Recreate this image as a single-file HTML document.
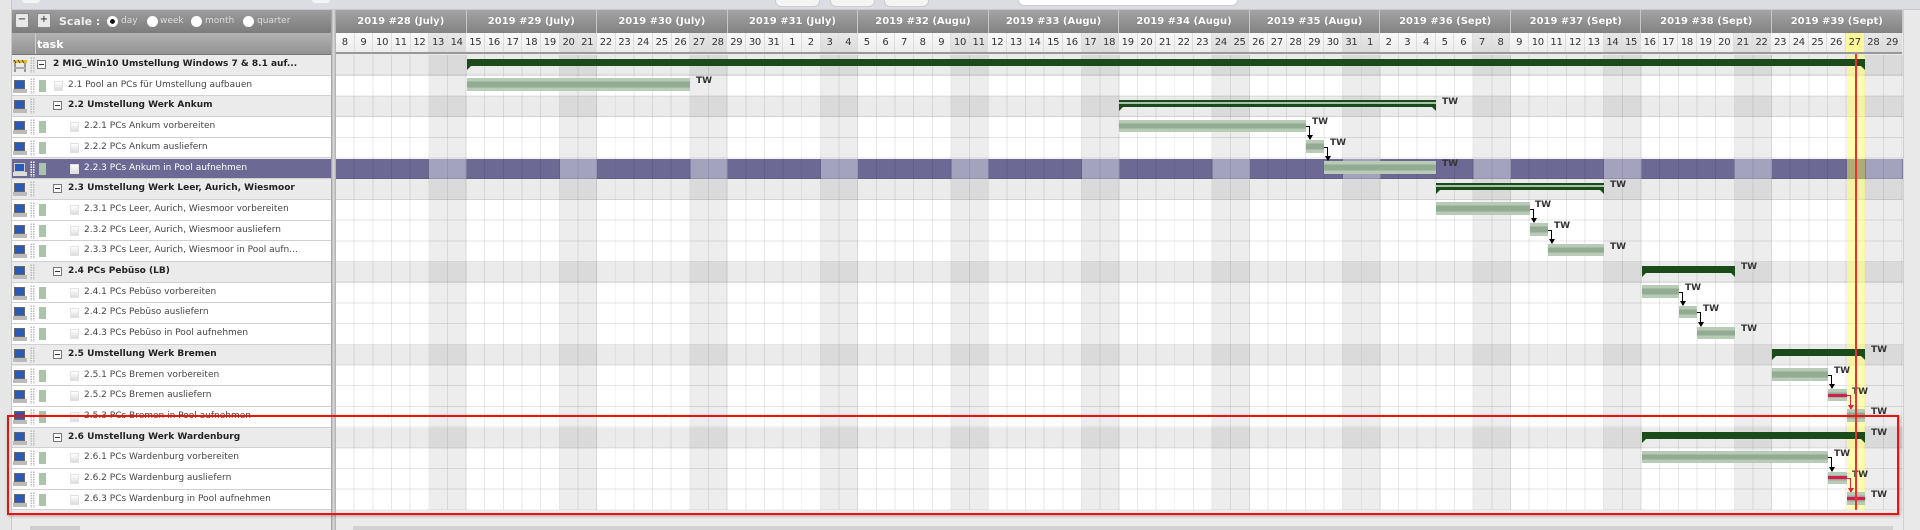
<!DOCTYPE html>
<html><head><meta charset="utf-8"><style>
*{margin:0;padding:0;box-sizing:border-box}
body{width:1920px;height:530px;overflow:hidden;background:#e9e9e9;position:relative;font-family:"DejaVu Sans","Liberation Sans",sans-serif}
.a{position:absolute}
.lrow{position:absolute;left:12px;width:319px;height:20.7px;border-bottom:1px solid #d0d0d0;font-size:9px;color:#444;white-space:nowrap}
.lrow.s{background:#ebebeb;font-weight:bold;color:#222}
.lrow.t{background:#fff}
.lrow.sel{background:#6c6a94;color:#fff}
.pc{position:absolute;left:1px;top:4px;width:14px;height:13px}
.grip{position:absolute;left:18px;top:2px;width:5px;height:16px;background:radial-gradient(circle,#bbb 0.8px,transparent 1px) 0 0/2.5px 2.5px}
.gr{position:absolute;left:27px;top:4px;width:7px;height:12px;background:#a9c4a9}
.box{position:absolute;top:5px;width:9px;height:9px;border:1px solid #777;background:#fafafa}
.box:after{content:"";position:absolute;left:1px;top:3px;width:5px;height:1px;background:#333}
.lf{position:absolute;top:5px;width:9px;height:10px;background:linear-gradient(#fff,#ddd);border:1px solid #e2e2e2}
.tx{position:absolute;top:4px}
.tb{position:absolute;height:12.5px;background:linear-gradient(#b7cbb7 0,#b7cbb7 28%,#93aa93 28%,#93aa93 72%,#b7cbb7 72%)}
.sb{position:absolute;height:7px;background:#1b4a1b}
.sb:before,.sb:after{content:"";position:absolute;top:7px;border-top:4px solid #1b4a1b}
.sb:before{left:0;border-right:4px solid transparent}
.sb:after{right:0;border-left:4px solid transparent}
.sb.p{background:linear-gradient(#1b4a1b 0,#1b4a1b 30%,#a8c4a8 30%,#a8c4a8 55%,#1b4a1b 55%)}
.tw{position:absolute;font-size:9px;font-weight:bold;color:#333}
.ar{position:absolute;width:4px;border-top:1px solid #000;border-right:1px solid #000}
.ar:after{content:"";position:absolute;right:-4px;bottom:-1px;border-left:3.5px solid transparent;border-right:3.5px solid transparent;border-top:5px solid #000}
.ar.r{border-color:#e0204a}
.ar.r:after{border-top-color:#e0204a;border-left-color:transparent;border-right-color:transparent}
.crit{position:absolute;height:3px;background:#d61e4e}
#wk{position:absolute;left:336px;top:10px;height:23px;display:flex}
#wk div{width:130.55px;height:23px;border-right:1px solid #c8c8c8;background:linear-gradient(#a4a4a4,#828282);color:#fff;font-weight:bold;font-size:10px;text-align:center;line-height:23px;text-shadow:0 0 1px #666}
#dy{position:absolute;left:336px;top:33px;height:21px;display:flex;border-bottom:2px solid #999}
#dy div{width:18.65px;height:19px;border-right:1px solid #ddd;background:linear-gradient(#fafafa,#ececec);font-size:10px;color:#333;text-align:center;line-height:19px;letter-spacing:-0.3px}
#dy div.w{background:linear-gradient(#e8e8e8,#dadada)}
#dy div.y{background:#fdf99a}
</style></head><body>
<div class="a" style="left:0;top:0;width:1920px;height:10px;background:#dcdde3;border-bottom:1px solid #c8c9cf"></div>
<div class="a" style="left:0;top:0;width:12px;height:530px;background:#e6e6e6;border-right:1px solid #c8c8c8"></div>
<div class="a" style="left:22px;top:0;width:18px;height:3px;background:#f4f4f4;border-radius:0 0 6px 6px"></div>
<div class="a" style="left:312px;top:0;width:18px;height:3px;background:#f4f4f4;border-radius:0 0 6px 6px"></div>
<div class="a" style="left:775px;top:0;width:45px;height:7px;background:#f4f4f4;border:1px solid #ccc;border-top:0;border-radius:0 0 6px 6px"></div>
<div class="a" style="left:830px;top:0;width:45px;height:7px;background:#f4f4f4;border:1px solid #ccc;border-top:0;border-radius:0 0 6px 6px"></div>
<div class="a" style="left:884px;top:0;width:45px;height:7px;background:#f4f4f4;border:1px solid #ccc;border-top:0;border-radius:0 0 6px 6px"></div>
<div class="a" style="left:1018px;top:0;width:220px;height:6px;background:#fff;border:1px solid #ccc;border-top:0;border-radius:0 0 6px 6px"></div>

<div class="a" style="left:12px;top:10px;width:319px;height:23px;background:linear-gradient(#9c9c9c,#7c7c7c)"></div>
<div class="a" style="left:15px;top:13px;width:14px;height:15px;background:#e8e8e8;border:1px solid #888;border-radius:2px;font-size:10px;text-align:center;line-height:12px;color:#222">−</div>
<div class="a" style="left:37px;top:13px;width:14px;height:15px;background:#e8e8e8;border:1px solid #888;border-radius:2px;font-size:10px;text-align:center;line-height:12px;color:#222">+</div>
<div class="a" style="left:59px;top:15px;font-size:11px;font-weight:bold;color:#eee">Scale :</div>
<div class="a" style="left:107px;top:16px;width:11px;height:11px;border-radius:50%;background:#fff;border:3px solid #fff;box-shadow:inset 0 0 0 3px #111"></div>
<div class="a" style="left:121px;top:16px;font-size:9px;color:#ddd">day</div>
<div class="a" style="left:147px;top:16px;width:11px;height:11px;border-radius:50%;background:#fff"></div>
<div class="a" style="left:160px;top:16px;font-size:9px;color:#ddd">week</div>
<div class="a" style="left:191px;top:16px;width:11px;height:11px;border-radius:50%;background:#fff"></div>
<div class="a" style="left:205px;top:16px;font-size:9px;color:#ddd">month</div>
<div class="a" style="left:243px;top:16px;width:11px;height:11px;border-radius:50%;background:#fff"></div>
<div class="a" style="left:257px;top:16px;font-size:9px;color:#ddd">quarter</div>
<div class="a" style="left:12px;top:33px;width:319px;height:22px;background:linear-gradient(#b2b2b2,#939393);border-bottom:1px solid #777"></div>
<div class="a" style="left:35px;top:33px;width:1px;height:21px;background:#ccc"></div>
<div class="a" style="left:37px;top:38px;font-size:11px;font-weight:bold;color:#fff">task</div>

<div id="wk"><div>2019 #28 (July)</div><div>2019 #29 (July)</div><div>2019 #30 (July)</div><div>2019 #31 (July)</div><div>2019 #32 (Augu)</div><div>2019 #33 (Augu)</div><div>2019 #34 (Augu)</div><div>2019 #35 (Augu)</div><div>2019 #36 (Sept)</div><div>2019 #37 (Sept)</div><div>2019 #38 (Sept)</div><div>2019 #39 (Sept)</div></div>
<div id="dy"><div>8</div><div>9</div><div>10</div><div>11</div><div>12</div><div class="w">13</div><div class="w">14</div><div>15</div><div>16</div><div>17</div><div>18</div><div>19</div><div class="w">20</div><div class="w">21</div><div>22</div><div>23</div><div>24</div><div>25</div><div>26</div><div class="w">27</div><div class="w">28</div><div>29</div><div>30</div><div>31</div><div>1</div><div>2</div><div class="w">3</div><div class="w">4</div><div>5</div><div>6</div><div>7</div><div>8</div><div>9</div><div class="w">10</div><div class="w">11</div><div>12</div><div>13</div><div>14</div><div>15</div><div>16</div><div class="w">17</div><div class="w">18</div><div>19</div><div>20</div><div>21</div><div>22</div><div>23</div><div class="w">24</div><div class="w">25</div><div>26</div><div>27</div><div>28</div><div>29</div><div>30</div><div class="w">31</div><div class="w">1</div><div>2</div><div>3</div><div>4</div><div>5</div><div>6</div><div class="w">7</div><div class="w">8</div><div>9</div><div>10</div><div>11</div><div>12</div><div>13</div><div class="w">14</div><div class="w">15</div><div>16</div><div>17</div><div>18</div><div>19</div><div>20</div><div class="w">21</div><div class="w">22</div><div>23</div><div>24</div><div>25</div><div>26</div><div class="y">27</div><div class="w">28</div><div class="w">29</div></div>

<div class="a" style="left:336px;top:55px;width:1567px;height:455.4px;overflow:hidden;background:#fff">
<div style="position:absolute;left:0;top:0;width:1567px;height:20.7px;background:#ebebeb"></div>
<div style="position:absolute;left:0;top:41.4px;width:1567px;height:20.7px;background:#ebebeb"></div>
<div style="position:absolute;left:0;top:103.5px;width:1567px;height:20.7px;background:#6c6a94"></div>
<div style="position:absolute;left:0;top:124.2px;width:1567px;height:20.7px;background:#ebebeb"></div>
<div style="position:absolute;left:0;top:207px;width:1567px;height:20.7px;background:#ebebeb"></div>
<div style="position:absolute;left:0;top:289.8px;width:1567px;height:20.7px;background:#ebebeb"></div>
<div style="position:absolute;left:0;top:372.6px;width:1567px;height:20.7px;background:#ebebeb"></div>
<div style="position:absolute;left:0;top:0;width:1567px;height:103.5px;background:repeating-linear-gradient(90deg,transparent 0,transparent 93.25px,rgba(0,0,0,.07) 93.25px,rgba(0,0,0,.07) 130.55px)"></div>
<div style="position:absolute;left:0;top:103.5px;width:1567px;height:20.7px;background:repeating-linear-gradient(90deg,transparent 0,transparent 93.25px,rgba(255,255,255,.38) 93.25px,rgba(255,255,255,.38) 130.55px)"></div>
<div style="position:absolute;left:0;top:124.2px;width:1567px;height:331.2px;background:repeating-linear-gradient(90deg,transparent 0,transparent 93.25px,rgba(0,0,0,.07) 93.25px,rgba(0,0,0,.07) 130.55px)"></div>
<div style="position:absolute;left:0;top:0;width:1567px;height:455.4px;background:repeating-linear-gradient(90deg,transparent 0,transparent 17.65px,rgba(0,0,0,.09) 17.65px,rgba(0,0,0,.09) 18.65px)"></div>
<div style="position:absolute;left:0;top:0;width:1567px;height:455.4px;background:repeating-linear-gradient(180deg,transparent 0,transparent 19.7px,rgba(0,0,0,.1) 19.7px,rgba(0,0,0,.1) 20.7px)"></div>
<div style="position:absolute;left:1510.65px;top:0;width:18.65px;height:455.4px;background:rgba(255,250,80,.45)"></div>
</div>
<div class="a" style="left:1903px;top:10px;width:17px;height:520px;background:#e9e9e9;border-left:1px solid #d0d0d0"></div>

<div class="a" style="left:331px;top:10px;width:5px;height:520px;background:linear-gradient(90deg,#999,#ddd,#aaa)"></div>

<div class="lrow s" style="top:55px"><div class="pc"><svg width="14" height="13"><rect x="0" y="1" width="14" height="3" fill="#e8c020"/><path d="M1 1l2 3M5 1l2 3M9 1l2 3" stroke="#444"/><rect x="1" y="4" width="2" height="9" fill="#999"/><rect x="11" y="4" width="2" height="9" fill="#999"/><rect x="1" y="8" width="12" height="2" fill="#aaa"/></svg></div><div class="grip"></div><div class="box" style="left:25px"></div><div class="tx" style="left:41px">2 MIG_Win10 Umstellung Windows 7 &amp; 8.1 auf...</div></div>
<div class="lrow t" style="top:75.7px"><div class="pc"><svg width="14" height="13"><rect x="1.5" y="0.5" width="10" height="8" fill="#2a5ab8" stroke="#666"/><rect x="0" y="9" width="14" height="4" fill="#bbb"/></svg></div><div class="grip"></div><div class="gr"></div><div class="lf" style="left:42px"></div><div class="tx" style="left:56px">2.1 Pool an PCs für Umstellung aufbauen</div></div>
<div class="lrow s" style="top:96.4px"><div class="pc"><svg width="14" height="13"><rect x="1.5" y="0.5" width="10" height="8" fill="#2a5ab8" stroke="#666"/><rect x="0" y="9" width="14" height="4" fill="#bbb"/></svg></div><div class="grip"></div><div class="box" style="left:41px"></div><div class="tx" style="left:56px">2.2 Umstellung Werk Ankum</div></div>
<div class="lrow t" style="top:117.1px"><div class="pc"><svg width="14" height="13"><rect x="1.5" y="0.5" width="10" height="8" fill="#2a5ab8" stroke="#666"/><rect x="0" y="9" width="14" height="4" fill="#bbb"/></svg></div><div class="grip"></div><div class="gr"></div><div class="lf" style="left:58px"></div><div class="tx" style="left:72px">2.2.1 PCs Ankum vorbereiten</div></div>
<div class="lrow t" style="top:137.8px"><div class="pc"><svg width="14" height="13"><rect x="1.5" y="0.5" width="10" height="8" fill="#2a5ab8" stroke="#666"/><rect x="0" y="9" width="14" height="4" fill="#bbb"/></svg></div><div class="grip"></div><div class="gr"></div><div class="lf" style="left:58px"></div><div class="tx" style="left:72px">2.2.2 PCs Ankum ausliefern</div></div>
<div class="lrow sel" style="top:158.5px"><div class="pc"><svg width="14" height="13"><rect x="1.5" y="0.5" width="10" height="8" fill="#2a5ab8" stroke="#ccc"/><rect x="0" y="9" width="14" height="4" fill="#ddd"/></svg></div><div class="grip" style="background:radial-gradient(circle,#fff 0.8px,transparent 1px) 0 0/2.5px 2.5px"></div><div class="gr"></div><div class="lf" style="left:58px"></div><div class="tx" style="left:72px">2.2.3 PCs Ankum in Pool aufnehmen</div></div>
<div class="lrow s" style="top:179.2px"><div class="pc"><svg width="14" height="13"><rect x="1.5" y="0.5" width="10" height="8" fill="#2a5ab8" stroke="#666"/><rect x="0" y="9" width="14" height="4" fill="#bbb"/></svg></div><div class="grip"></div><div class="box" style="left:41px"></div><div class="tx" style="left:56px">2.3 Umstellung Werk Leer, Aurich, Wiesmoor</div></div>
<div class="lrow t" style="top:199.9px"><div class="pc"><svg width="14" height="13"><rect x="1.5" y="0.5" width="10" height="8" fill="#2a5ab8" stroke="#666"/><rect x="0" y="9" width="14" height="4" fill="#bbb"/></svg></div><div class="grip"></div><div class="gr"></div><div class="lf" style="left:58px"></div><div class="tx" style="left:72px">2.3.1 PCs Leer, Aurich, Wiesmoor vorbereiten</div></div>
<div class="lrow t" style="top:220.6px"><div class="pc"><svg width="14" height="13"><rect x="1.5" y="0.5" width="10" height="8" fill="#2a5ab8" stroke="#666"/><rect x="0" y="9" width="14" height="4" fill="#bbb"/></svg></div><div class="grip"></div><div class="gr"></div><div class="lf" style="left:58px"></div><div class="tx" style="left:72px">2.3.2 PCs Leer, Aurich, Wiesmoor ausliefern</div></div>
<div class="lrow t" style="top:241.3px"><div class="pc"><svg width="14" height="13"><rect x="1.5" y="0.5" width="10" height="8" fill="#2a5ab8" stroke="#666"/><rect x="0" y="9" width="14" height="4" fill="#bbb"/></svg></div><div class="grip"></div><div class="gr"></div><div class="lf" style="left:58px"></div><div class="tx" style="left:72px">2.3.3 PCs Leer, Aurich, Wiesmoor in Pool aufn...</div></div>
<div class="lrow s" style="top:262px"><div class="pc"><svg width="14" height="13"><rect x="1.5" y="0.5" width="10" height="8" fill="#2a5ab8" stroke="#666"/><rect x="0" y="9" width="14" height="4" fill="#bbb"/></svg></div><div class="grip"></div><div class="box" style="left:41px"></div><div class="tx" style="left:56px">2.4 PCs Pebüso (LB)</div></div>
<div class="lrow t" style="top:282.7px"><div class="pc"><svg width="14" height="13"><rect x="1.5" y="0.5" width="10" height="8" fill="#2a5ab8" stroke="#666"/><rect x="0" y="9" width="14" height="4" fill="#bbb"/></svg></div><div class="grip"></div><div class="gr"></div><div class="lf" style="left:58px"></div><div class="tx" style="left:72px">2.4.1 PCs Pebüso vorbereiten</div></div>
<div class="lrow t" style="top:303.4px"><div class="pc"><svg width="14" height="13"><rect x="1.5" y="0.5" width="10" height="8" fill="#2a5ab8" stroke="#666"/><rect x="0" y="9" width="14" height="4" fill="#bbb"/></svg></div><div class="grip"></div><div class="gr"></div><div class="lf" style="left:58px"></div><div class="tx" style="left:72px">2.4.2 PCs Pebüso ausliefern</div></div>
<div class="lrow t" style="top:324.1px"><div class="pc"><svg width="14" height="13"><rect x="1.5" y="0.5" width="10" height="8" fill="#2a5ab8" stroke="#666"/><rect x="0" y="9" width="14" height="4" fill="#bbb"/></svg></div><div class="grip"></div><div class="gr"></div><div class="lf" style="left:58px"></div><div class="tx" style="left:72px">2.4.3 PCs Pebüso in Pool aufnehmen</div></div>
<div class="lrow s" style="top:344.8px"><div class="pc"><svg width="14" height="13"><rect x="1.5" y="0.5" width="10" height="8" fill="#2a5ab8" stroke="#666"/><rect x="0" y="9" width="14" height="4" fill="#bbb"/></svg></div><div class="grip"></div><div class="box" style="left:41px"></div><div class="tx" style="left:56px">2.5 Umstellung Werk Bremen</div></div>
<div class="lrow t" style="top:365.5px"><div class="pc"><svg width="14" height="13"><rect x="1.5" y="0.5" width="10" height="8" fill="#2a5ab8" stroke="#666"/><rect x="0" y="9" width="14" height="4" fill="#bbb"/></svg></div><div class="grip"></div><div class="gr"></div><div class="lf" style="left:58px"></div><div class="tx" style="left:72px">2.5.1 PCs Bremen vorbereiten</div></div>
<div class="lrow t" style="top:386.2px"><div class="pc"><svg width="14" height="13"><rect x="1.5" y="0.5" width="10" height="8" fill="#2a5ab8" stroke="#666"/><rect x="0" y="9" width="14" height="4" fill="#bbb"/></svg></div><div class="grip"></div><div class="gr"></div><div class="lf" style="left:58px"></div><div class="tx" style="left:72px">2.5.2 PCs Bremen ausliefern</div></div>
<div class="lrow t" style="top:406.9px"><div class="pc"><svg width="14" height="13"><rect x="1.5" y="0.5" width="10" height="8" fill="#2a5ab8" stroke="#666"/><rect x="0" y="9" width="14" height="4" fill="#bbb"/></svg></div><div class="grip"></div><div class="gr"></div><div class="lf" style="left:58px"></div><div class="tx" style="left:72px">2.5.3 PCs Bremen in Pool aufnehmen</div></div>
<div class="lrow s" style="top:427.6px"><div class="pc"><svg width="14" height="13"><rect x="1.5" y="0.5" width="10" height="8" fill="#2a5ab8" stroke="#666"/><rect x="0" y="9" width="14" height="4" fill="#bbb"/></svg></div><div class="grip"></div><div class="box" style="left:41px"></div><div class="tx" style="left:56px">2.6 Umstellung Werk Wardenburg</div></div>
<div class="lrow t" style="top:448.3px"><div class="pc"><svg width="14" height="13"><rect x="1.5" y="0.5" width="10" height="8" fill="#2a5ab8" stroke="#666"/><rect x="0" y="9" width="14" height="4" fill="#bbb"/></svg></div><div class="grip"></div><div class="gr"></div><div class="lf" style="left:58px"></div><div class="tx" style="left:72px">2.6.1 PCs Wardenburg vorbereiten</div></div>
<div class="lrow t" style="top:469px"><div class="pc"><svg width="14" height="13"><rect x="1.5" y="0.5" width="10" height="8" fill="#2a5ab8" stroke="#666"/><rect x="0" y="9" width="14" height="4" fill="#bbb"/></svg></div><div class="grip"></div><div class="gr"></div><div class="lf" style="left:58px"></div><div class="tx" style="left:72px">2.6.2 PCs Wardenburg ausliefern</div></div>
<div class="lrow t" style="top:489.7px"><div class="pc"><svg width="14" height="13"><rect x="1.5" y="0.5" width="10" height="8" fill="#2a5ab8" stroke="#666"/><rect x="0" y="9" width="14" height="4" fill="#bbb"/></svg></div><div class="grip"></div><div class="gr"></div><div class="lf" style="left:58px"></div><div class="tx" style="left:72px">2.6.3 PCs Wardenburg in Pool aufnehmen</div></div>

<div class="sb" style="left:466.55px;top:59px;width:1398.75px"></div>
<div class="tb" style="left:466.55px;top:78.2px;width:223.8px"></div><div class="tw" style="left:696px;top:76px">TW</div>
<div class="sb p" style="left:1119.3px;top:100.4px;width:317.05px"></div><div class="tw" style="left:1442px;top:97px">TW</div>
<div class="tb" style="left:1119.3px;top:119.6px;width:186.5px"></div><div class="tw" style="left:1312px;top:117px">TW</div>
<div class="ar" style="left:1305.8px;top:126px;height:13px"></div>
<div class="tb" style="left:1305.8px;top:140.3px;width:18.65px"></div><div class="tw" style="left:1330px;top:138px">TW</div>
<div class="ar" style="left:1324.45px;top:146.5px;height:13.5px"></div>
<div class="tb" style="left:1324.45px;top:161px;width:111.9px"></div><div class="tw" style="left:1442px;top:159px">TW</div>
<div class="sb p" style="left:1436.35px;top:183.2px;width:167.85px"></div><div class="tw" style="left:1610px;top:180px">TW</div>
<div class="tb" style="left:1436.35px;top:202.4px;width:93.25px"></div><div class="tw" style="left:1535px;top:200px">TW</div>
<div class="ar" style="left:1529.6px;top:209px;height:13px"></div>
<div class="tb" style="left:1529.6px;top:223.1px;width:18.65px"></div><div class="tw" style="left:1554px;top:221px">TW</div>
<div class="ar" style="left:1548.25px;top:229.5px;height:13.5px"></div>
<div class="tb" style="left:1548.25px;top:243.8px;width:55.95px"></div><div class="tw" style="left:1610px;top:242px">TW</div>
<div class="sb" style="left:1641.5px;top:266px;width:93.25px"></div><div class="tw" style="left:1741px;top:262px">TW</div>
<div class="tb" style="left:1641.5px;top:285.2px;width:37.3px"></div><div class="tw" style="left:1685px;top:283px">TW</div>
<div class="ar" style="left:1678.8px;top:291.5px;height:13.5px"></div>
<div class="tb" style="left:1678.8px;top:305.9px;width:18.65px"></div><div class="tw" style="left:1703px;top:304px">TW</div>
<div class="ar" style="left:1697.45px;top:312px;height:14px"></div>
<div class="tb" style="left:1697.45px;top:326.6px;width:37.3px"></div><div class="tw" style="left:1741px;top:324px">TW</div>
<div class="sb" style="left:1772.05px;top:348.8px;width:93.25px"></div><div class="tw" style="left:1871px;top:345px">TW</div>
<div class="tb" style="left:1772.05px;top:368px;width:55.95px"></div><div class="tw" style="left:1834px;top:366px">TW</div>
<div class="ar" style="left:1828px;top:374.5px;height:13.5px"></div>
<div class="tb" style="left:1828px;top:388.7px;width:18.65px"></div><div class="crit" style="left:1828px;top:393.5px;width:18.65px"></div><div class="tw" style="left:1852px;top:387px">TW</div>
<div class="ar r" style="left:1846.65px;top:395px;height:13.5px"></div>
<div class="tb" style="left:1846.65px;top:409.4px;width:18.65px"></div><div class="tw" style="left:1871px;top:407px">TW</div>
<div class="sb" style="left:1641.5px;top:431.6px;width:223.8px"></div><div class="tw" style="left:1871px;top:428px">TW</div>
<div class="tb" style="left:1641.5px;top:450.8px;width:186.5px"></div><div class="tw" style="left:1834px;top:449px">TW</div>
<div class="ar" style="left:1828px;top:457px;height:14px"></div>
<div class="tb" style="left:1828px;top:471.5px;width:18.65px"></div><div class="crit" style="left:1828px;top:476px;width:18.65px"></div><div class="tw" style="left:1852px;top:470px">TW</div>
<div class="ar r" style="left:1846.65px;top:478px;height:13.5px"></div>
<div class="tb" style="left:1846.65px;top:492.2px;width:18.65px"></div><div class="crit" style="left:1846.65px;top:497px;width:18.65px"></div><div class="tw" style="left:1871px;top:490px">TW</div>

<div class="a" style="left:1855px;top:54px;width:2px;height:456px;background:#f03030"></div>

<div class="a" style="left:12px;top:510px;width:1891px;height:20px;background:#ebebeb"></div>
<div class="a" style="left:30px;top:526px;width:50px;height:4px;background:#cfcfcf"></div>
<div class="a" style="left:353px;top:526px;width:1540px;height:4px;background:#d2d2d2"></div>
<div class="a" style="left:331px;top:510px;width:5px;height:20px;background:linear-gradient(90deg,#999,#ddd,#aaa)"></div>

<div class="a" style="left:7px;top:415px;width:1892px;height:100px;border:2px solid #f01010;box-shadow:1px 1px 3px rgba(0,0,0,.3)"></div>
</body></html>
